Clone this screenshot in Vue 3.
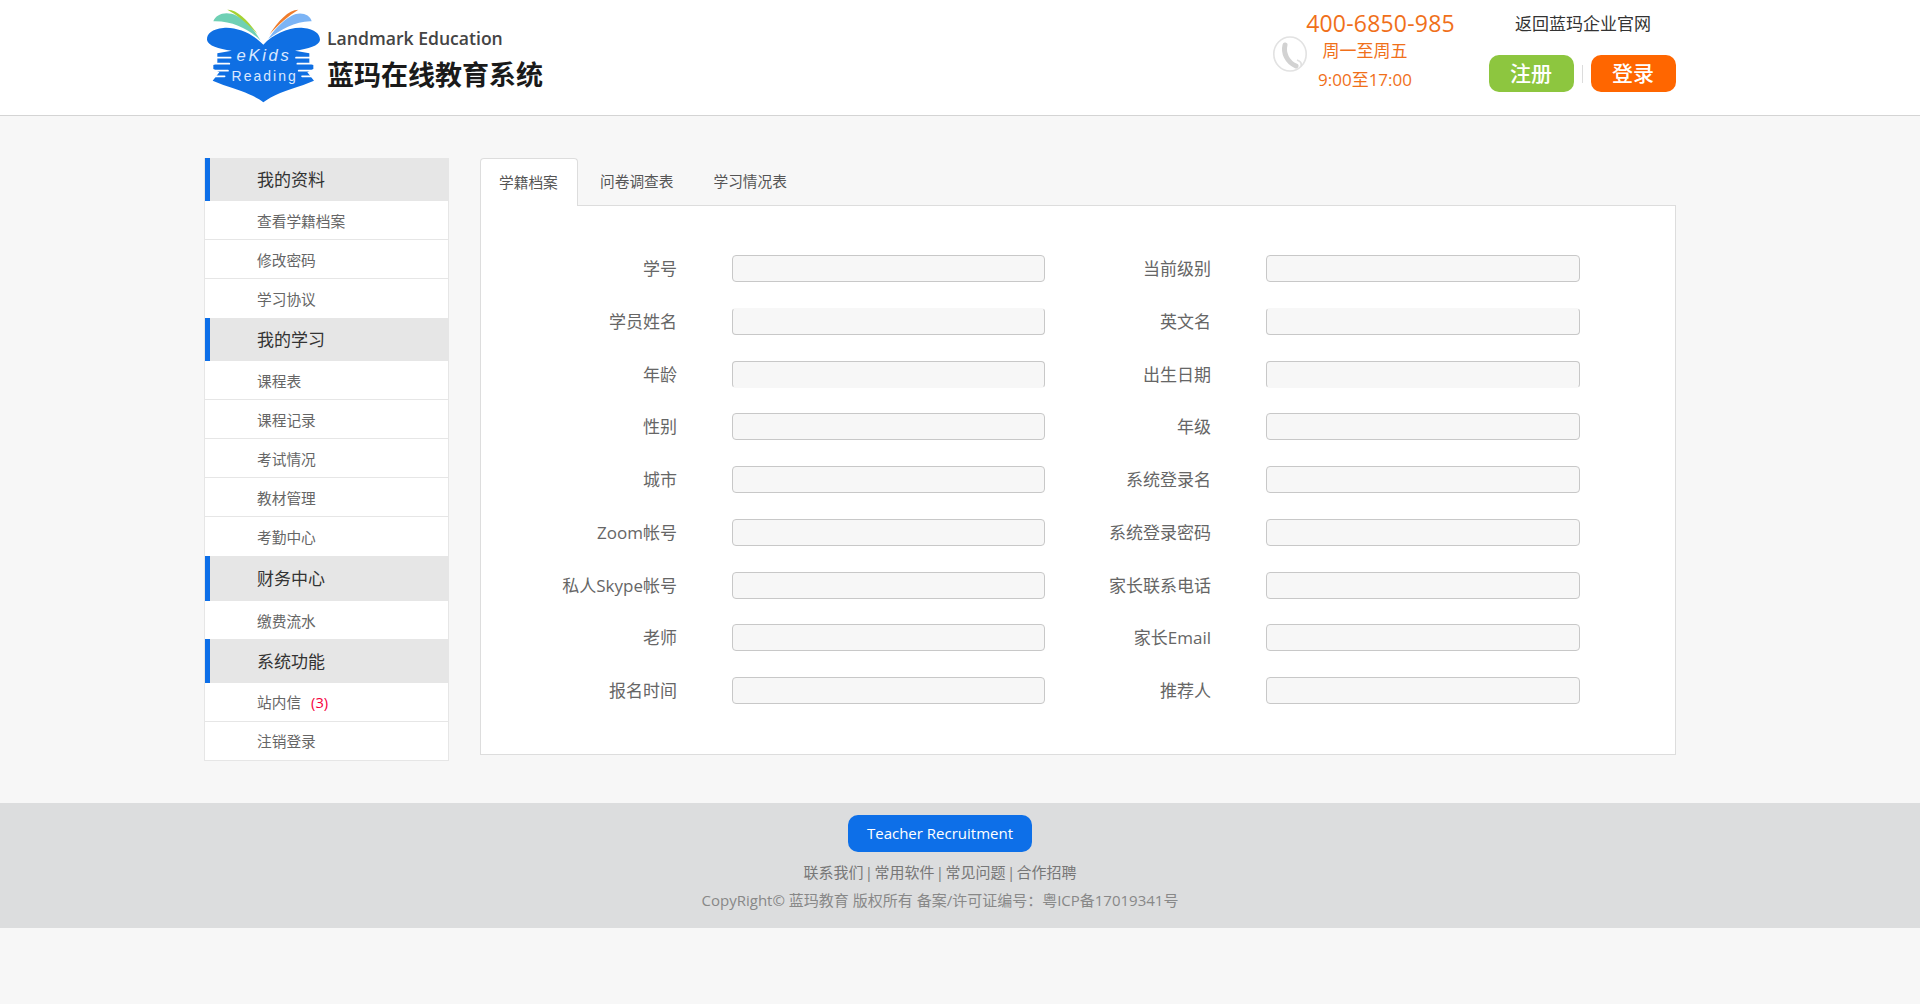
<script setup>
const menu = [
  { title: '我的资料', cls: '', items: [{ t: '查看学籍档案' }, { t: '修改密码' }, { t: '学习协议' }] },
  { title: '我的学习', cls: '', items: [{ t: '课程表' }, { t: '课程记录' }, { t: '考试情况' }, { t: '教材管理' }, { t: '考勤中心' }] },
  { title: '财务中心', cls: 'tall', items: [{ t: '缴费流水', cls: 'short' }] },
  { title: '系统功能', cls: 'mid', items: [{ t: '站内信', badge: '(3)', cls: 'up' }, { t: '注销登录', cls: 'short up' }] }
]
const tabs = ['学籍档案', '问卷调查表', '学习情况表']
const fields = [
  '学号', '当前级别', '学员姓名', '英文名', '年龄', '出生日期', '性别', '年级', '城市', '系统登录名',
  'Zoom帐号', '系统登录密码', '私人Skype帐号', '家长联系电话', '老师', '家长Email', '报名时间', '推荐人'
]
</script>

<template>
  <div class="page">
    <header class="header">
      <div class="header-inner">
        <div class="brand">
          <svg class="logo" viewBox="0 0 390 312" width="130" height="104">
            <path d="M40 52C48 30 78 20 110 35C140 50 165 80 182 110C150 78 100 50 40 52Z" fill="#6fd0b4"/>
            <path d="M82 17C110 15 145 50 172 90C140 55 110 32 82 17Z" fill="#a5d233"/>
            <path d="M295 17C265 18 235 50 208 92C235 62 265 35 295 17Z" fill="#ef7d2d"/>
            <path d="M335 52C330 30 300 22 275 35C245 52 220 80 205 105C240 78 290 50 335 52Z" fill="#7cb4f5"/>
            <path d="M190 122C160 90 110 68 70 72C35 75 20 90 21 108C24 125 55 135 95 140L52 148L52 176L40 183L40 195L58 205L38 230L70 243C120 258 165 275 190 295C215 275 260 258 310 243L342 230L322 205L340 195L340 183L328 176L328 148L285 140C325 135 358 125 360 108C360 90 345 75 310 72C270 68 220 90 190 122Z" fill="#0f6fe3"/>
            <g class="gaps">
              <path d="M46 161H92M34 179H88M36 200H84M36 217H74"/>
              <path d="M334 161H288M346 179H292M344 200H296M344 217H306"/>
            </g>
            <text x="192" y="172" class="logo-top" text-anchor="middle">eKids</text>
            <text x="194" y="232" class="logo-bottom" text-anchor="middle">Reading</text>
          </svg>
          <div class="brand-text">
            <div class="brand-en">Landmark Education</div>
            <div class="brand-cn">蓝玛在线教育系统</div>
          </div>
        </div>
        <div class="contact">
          <svg class="phone" viewBox="0 0 36 36" width="36" height="36">
            <ellipse cx="18" cy="18" rx="16.2" ry="17" fill="#fff" stroke="#e2e2e2" stroke-width="1.6"/>
            <path d="M13 9C11 17 15 26 24 30" fill="none" stroke="#d2d2d2" stroke-width="5" stroke-linecap="round"/>
            <path d="M25 24C28 25 30 27 29 30" fill="none" stroke="#e0e0e0" stroke-width="1.6"/>
          </svg>
          <div class="contact-text">
            <div class="tel">400-6850-985</div>
            <div class="hours">周一至周五</div>
            <div class="hours time">9:00至17:00</div>
          </div>
        </div>
        <div class="account">
          <a class="back">返回蓝玛企业官网</a>
          <div class="auth">
            <span class="btn green">注册</span>
            <i class="sep"></i>
            <span class="btn orange">登录</span>
          </div>
        </div>
      </div>
    </header>

    <main class="main">
      <aside class="sidebar">
        <section v-for="group in menu" :key="group.title">
          <h3 class="group" :class="group.cls">{{ group.title }}</h3>
          <a v-for="item in group.items" :key="item.t" class="item" :class="item.cls">
            {{ item.t }}<em v-if="item.badge" class="badge">{{ item.badge }}</em>
          </a>
        </section>
      </aside>
      <section class="content">
        <nav class="tabs">
          <span v-for="(tab, i) in tabs" :key="tab" class="tab" :class="{ active: i === 0 }">{{ tab }}</span>
        </nav>
        <div class="panel">
          <div class="form">
            <div v-for="f in fields" :key="f" class="field">
              <label class="label">{{ f }}</label>
              <div class="input"></div>
            </div>
          </div>
        </div>
      </section>
    </main>

    <footer class="footer">
      <div class="footer-inner">
        <span class="recruit">Teacher Recruitment</span>
        <p class="links">联系我们 | 常用软件 | 常见问题 | 合作招聘</p>
        <p class="copy">CopyRight© 蓝玛教育 版权所有 备案/许可证编号：粤ICP备17019341号</p>
      </div>
    </footer>
  </div>
</template>

<style>
html, body { margin: 0; background: #f7f7f7; }
</style>

<style scoped>
.page {
  min-height: 1004px;
  background: #f7f7f7;
  font-family: "Open Sans", "Noto Sans CJK SC", sans-serif;
  color: #666;
}
.header {
  height: 115px;
  background: #fff;
  border-bottom: 1px solid #d4d4d4;
}
.header-inner {
  width: 1472px;
  margin-left: 204px;
  height: 115px;
  display: flex;
  align-items: flex-start;
}
.brand {
  display: flex;
  width: 1066px;
  padding-top: 4px;
  margin-left: -4px;
  flex: none;
  box-sizing: border-box;
}
.logo { flex: none; }
.gaps path { fill: none; stroke: #fff; stroke-width: 5; stroke-linecap: round; }
.logo-top { font: italic 50px "Liberation Sans", sans-serif; fill: #dbe8ff; letter-spacing: 8px; }
.logo-bottom { font: 42px "Liberation Sans", sans-serif; fill: #dbe8ff; letter-spacing: 6px; }
.brand-text { margin-left: -3px; padding-top: 22px; }
.brand-en {
  font-size: 17.6px;
  line-height: 24px;
  font-weight: 600;
  color: #444;
  white-space: nowrap;
}
.brand-cn {
  margin-top: 7px;
  font-size: 27px;
  line-height: 36px;
  font-weight: 700;
  color: #1a1a1a;
  white-space: nowrap;
}
.contact {
  display: flex;
  width: 222px;
  flex: none;
  padding-top: 8px;
  box-sizing: border-box;
}
.phone { margin: 28px 0 0 6px; flex: none; }
.contact-text {
  width: 150px;
  margin-left: -3px;
  color: #f0701a;
  text-align: center;
}
.tel { font-size: 23px; line-height: 30px; letter-spacing: 0.2px; white-space: nowrap; margin-left: 1px; }
.hours { font-size: 17px; line-height: 28px; margin-top: -1px; margin-left: -30px; }
.time { margin-top: 1px; margin-left: -30px; }
.account { width: 188px; flex: none; display: flex; flex-direction: column; align-items: center; padding-top: 11px; }
.back { font-size: 17px; line-height: 26px; color: #333; margin-right: -2px; white-space: nowrap; }
.auth { display: flex; align-items: center; margin-top: 18px; }
.btn {
  width: 85px;
  height: 37px;
  border-radius: 10px;
  color: #fff;
  font-size: 21px;
  font-weight: 500;
  line-height: 37px;
  text-align: center;
}
.green { background: #8dc63f; }
.orange { background: #ff6600; }
.sep { width: 1px; height: 18px; margin: 0 8px; background: #dcdcdc; }
.main {
  width: 1472px;
  margin-left: 204px;
  padding-top: 42px;
  display: flex;
  gap: 31px;
  align-items: flex-start;
}
.sidebar {
  width: 245px;
  flex: none;
  box-sizing: border-box;
  background: #fff;
  border: 1px solid #e6e6e6;
  border-top: 0;
}
.group {
  height: 43px;
  margin: 0 -1px 0 0;
  box-sizing: border-box;
  padding-left: 47px;
  background: #e6e6e6;
  border-left: 5px solid #0d6fe8;
  font-size: 17px;
  font-weight: 400;
  line-height: 43px;
  color: #333;
}
.group.tall { height: 45px; line-height: 46px; }
.group.mid { height: 44px; line-height: 46px; }
.item {
  display: block;
  height: 39px;
  box-sizing: border-box;
  padding-left: 52px;
  border-bottom: 1px solid #e6e6e6;
  font-size: 14.7px;
  line-height: 41px;
  color: #666;
}
.item:last-child { border-bottom: 0; }
.item.short { height: 38px; line-height: 40px; }
.item.up { line-height: 39px; }
.badge { margin-left: 10px; font-style: normal; color: #f5003c; }
.content { width: 1196px; flex: none; }
.tabs { display: flex; height: 47px; position: relative; z-index: 1; }
.tab {
  box-sizing: border-box;
  height: 48px;
  padding: 0 20px;
  font-size: 14.7px;
  line-height: 47px;
  color: #555;
  white-space: nowrap;
}
.tab.active {
  width: 98px;
  margin-right: 2px;
  padding: 0 18px;
  background: #fff;
  border: 1px solid #ddd;
  border-bottom: 0;
  border-radius: 4px 4px 0 0;
}
.panel {
  box-sizing: border-box;
  height: 550px;
  background: #fff;
  border: 1px solid #ddd;
  padding-top: 49px;
}
.form {
  display: grid;
  grid-template-columns: 534px 534px;
  grid-auto-rows: 52.75px;
}
.field { display: flex; height: 27px; align-items: center; }
.label {
  width: 196px;
  flex: none;
  margin-top: -2px;
  text-align: right;
  font-size: 17px;
  color: #666;
  white-space: nowrap;
}
.input {
  width: 313px;
  height: 27px;
  margin-left: 55px;
  flex: none;
  box-sizing: border-box;
  background: #f7f7f7;
  border: 1px solid #c8c8c8;
  border-radius: 4px;
}
.field:nth-child(even) .input { width: 314px; }
.field:nth-child(3) .input,
.field:nth-child(4) .input { border-top-color: transparent; }
.field:nth-child(5) .input,
.field:nth-child(6) .input { border-bottom-color: transparent; }
.footer {
  margin-top: 42px;
  height: 125px;
  background: #dcddde;
}
.footer-inner {
  width: 1472px;
  margin-left: 204px;
  padding-top: 12px;
  text-align: center;
}
.recruit {
  display: inline-block;
  width: 184px;
  height: 37px;
  border-radius: 10px;
  background: #0d6fe8;
  color: #fff;
  font-size: 15px;
  line-height: 37px;
  font-weight: 500;
}
.links { margin: 8px 0 0; font-size: 15px; line-height: 24px; word-spacing: -2.5px; color: #777; }
.copy { margin: 4px 0 0; font-size: 15px; line-height: 24px; color: #888; }
</style>
